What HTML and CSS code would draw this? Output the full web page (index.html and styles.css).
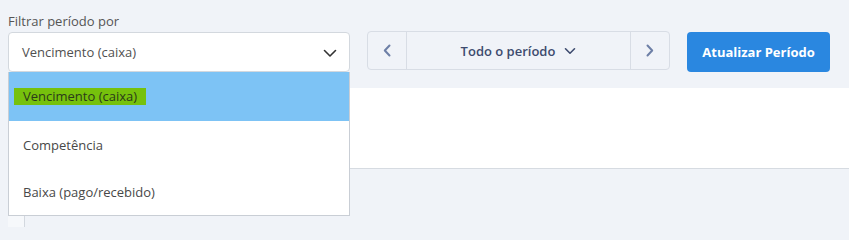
FILE: index.html
```html
<!DOCTYPE html>
<html lang="pt">
<head>
<meta charset="utf-8">
<link rel="stylesheet" href="styles.css">
</head>
<body>
<div class="toolbar">
  <div class="filter">
    <label class="filter-label">Filtrar período por</label>
    <div class="select">
      <span class="select-value">Vencimento (caixa)</span>
      <svg class="select-caret" width="14" height="9" viewBox="0 0 14 9"><path d="M1.5 1.5 L7 7 L12.5 1.5" fill="none" stroke="#333" stroke-width="1.6" stroke-linecap="round" stroke-linejoin="round"/></svg>
    </div>
    <ul class="menu">
      <li class="option option-active"><span class="sel">Vencimento (caixa)</span></li>
      <li class="option">Competência</li>
      <li class="option">Baixa (pago/recebido)</li>
    </ul>
  </div>
  <div class="period-nav">
    <button class="nav-btn nav-prev"><svg width="8" height="13" viewBox="0 0 8 13"><path d="M6.5 1.5 L1.8 6.5 L6.5 11.5" fill="none" stroke="#6d7fa6" stroke-width="2" stroke-linecap="round" stroke-linejoin="round"/></svg></button>
    <button class="nav-mid">Todo o período <svg class="mid-caret" width="12" height="8" viewBox="0 0 12 8"><path d="M1.5 1.8 L6 6.2 L10.5 1.8" fill="none" stroke="#3d4b6e" stroke-width="1.6" stroke-linecap="round" stroke-linejoin="round"/></svg></button>
    <button class="nav-btn nav-next"><svg width="8" height="13" viewBox="0 0 8 13"><path d="M1.5 1.5 L6.2 6.5 L1.5 11.5" fill="none" stroke="#6d7fa6" stroke-width="2" stroke-linecap="round" stroke-linejoin="round"/></svg></button>
  </div>
  <button class="update-btn">Atualizar Período</button>
</div>
<div class="panel"></div>
<div class="lower">
  <div class="lower-edge"></div>
</div>
</body>
</html>
```

FILE: styles.css
```css
* { box-sizing: border-box; }
html, body { margin: 0; padding: 0; }
body {
  background: #f0f3f8;
  font-family: "Open Sans", "Noto Sans", sans-serif;
  font-size: 13px;
  color: #555;
  width: 849px;
  height: 227px;
  overflow: hidden;
}
.toolbar {
  display: flex;
  align-items: flex-start;
  padding: 12px 0 0 8px;
  height: 88px;
}
.filter {
  position: relative;
  width: 342px;
  display: flex;
  flex-direction: column;
}
.filter-label {
  display: block;
  line-height: 18px;
  color: #555;
  margin-bottom: 2px;
}
.select {
  height: 40px;
  background: #fff;
  border: 1px solid #d3d8de;
  border-radius: 4px;
  display: flex;
  align-items: center;
  justify-content: space-between;
  padding: 0 12px 0 13px;
  color: #505050;
}
.select-caret { margin-top: 2px; }
.menu {
  position: absolute;
  left: 0;
  top: 60px;
  width: 342px;
  margin: 0;
  padding: 0;
  list-style: none;
  background: #fff;
  border: 1px solid #c9ced5;
  border-top: none;
  z-index: 5;
}
.option {
  height: 47px;
  display: flex;
  align-items: center;
  padding-left: 14px;
  color: #484848;
}
.option-active {
  height: 49px;
  background: #7dc3f5;
}
.sel {
  background: #76c10c;
  color: #2b3a1a;
  padding: 0 9px;
  margin-left: -9px;
  line-height: 17px;
}
.period-nav {
  display: flex;
  margin-left: 17px;
  margin-top: 19px;
  height: 39px;
  border: 1px solid #d8dde5;
  border-radius: 4px;
  background: #f0f3f8;
}
.period-nav button {
  border: none;
  background: transparent;
  font-family: inherit;
  cursor: pointer;
  display: flex;
  align-items: center;
  justify-content: center;
  padding: 0;
}
.nav-btn { width: 39px; }
.nav-prev { border-right: 1px solid #d8dde5 !important; }
.nav-next { border-left: 1px solid #d8dde5 !important; }
.nav-mid {
  width: 223px;
  font-size: 13px;
  font-weight: 600;
  color: #3d4b6e;
  gap: 9px;
}
.mid-caret { margin-top: 1px; }
.update-btn {
  margin-left: 17px;
  margin-top: 20px;
  width: 143px;
  height: 40px;
  border: none;
  border-radius: 4px;
  background: #2a87e0;
  color: #fff;
  font-family: inherit;
  font-size: 13px;
  font-weight: 700;
  cursor: pointer;
}
.panel {
  margin-left: 8px;
  height: 81px;
  background: #fff;
  border-bottom: 1px solid #d6dbe1;
}
.lower {
  padding: 46px 0 0 8px;
}
.lower-edge {
  width: 17px;
  height: 20px;
  background: #f6f8fb;
  border-right: 1px solid #d3d8df;
}
```
